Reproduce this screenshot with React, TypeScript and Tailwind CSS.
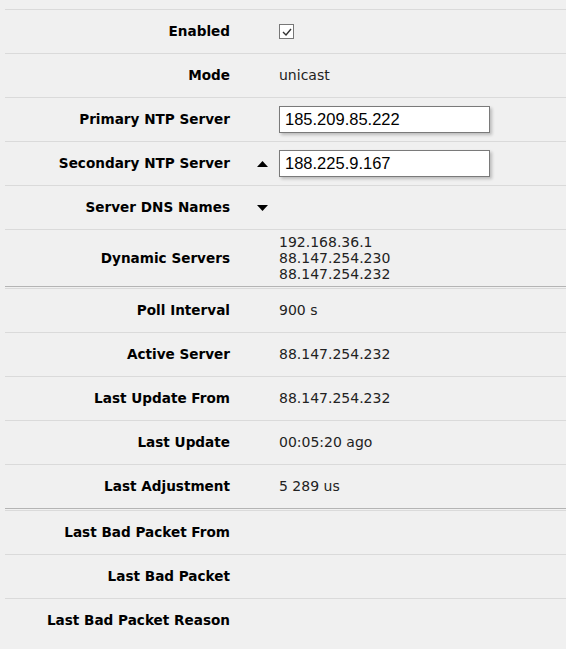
import React from "react";

const Row = ({ label, children, tall, arrow }: { label: string; children?: React.ReactNode; tall?: boolean; arrow?: "up" | "down" }) => (
  <div className={`flex items-center border-t border-[#dadada] ${tall ? "h-[57px]" : "h-[44px]"}`}>
    <div className="w-[225px] shrink-0 text-right font-bold text-[13.6px] text-black">{label}</div>
    <div className="w-[49px] shrink-0 flex justify-end pr-[11px]">
      {arrow === "up" && (
        <svg width="11" height="6" viewBox="0 0 11 6"><path d="M5.5 0 L11 6 L0 6 Z" fill="#000" /></svg>
      )}
      {arrow === "down" && (
        <svg width="11" height="6" viewBox="0 0 11 6"><path d="M0 0 L11 0 L5.5 6 Z" fill="#000" /></svg>
      )}
    </div>
    <div className="text-[14px] text-[#222]">{children}</div>
  </div>
);

const Sep = () => <div className="h-[2px] border-t border-[#b4b4b4]" />;

const Input = ({ value }: { value: string }) => (
  <div className="w-[211px] h-[27px] bg-white border border-[#7a7a7a] shadow-[2px_2px_3px_rgba(0,0,0,0.22)] flex items-center pl-[5px] text-[16.5px] text-black font-['Liberation_Sans',Arial,sans-serif]">
    {value}
  </div>
);

export default function App() {
  return (
    <div className="min-h-[649px] bg-[#f0f0f0] pt-[9px] pl-[5px] font-['DejaVu_Sans',Verdana,sans-serif]">
      <Row label="Enabled">
        <div className="w-[15px] h-[15px] border border-[#777] bg-white flex items-center justify-center">
          <svg width="10" height="8" viewBox="0 0 10 8"><path d="M1 4 L4 7 L9 1" stroke="#333" strokeWidth="1.4" fill="none" /></svg>
        </div>
      </Row>
      <Row label="Mode">unicast</Row>
      <Row label="Primary NTP Server"><Input value="185.209.85.222" /></Row>
      <Row label="Secondary NTP Server" arrow="up"><Input value="188.225.9.167" /></Row>
      <Row label="Server DNS Names" arrow="down" />
      <Row label="Dynamic Servers" tall>
        <div className="leading-[16px]">
          <div>192.168.36.1</div>
          <div>88.147.254.230</div>
          <div>88.147.254.232</div>
        </div>
      </Row>
      <Sep />
      <Row label="Poll Interval">900 s</Row>
      <Row label="Active Server">88.147.254.232</Row>
      <Row label="Last Update From">88.147.254.232</Row>
      <Row label="Last Update">00:05:20 ago</Row>
      <Row label="Last Adjustment">5 289 us</Row>
      <Sep />
      <Row label="Last Bad Packet From" />
      <Row label="Last Bad Packet" />
      <Row label="Last Bad Packet Reason" />
    </div>
  );
}
